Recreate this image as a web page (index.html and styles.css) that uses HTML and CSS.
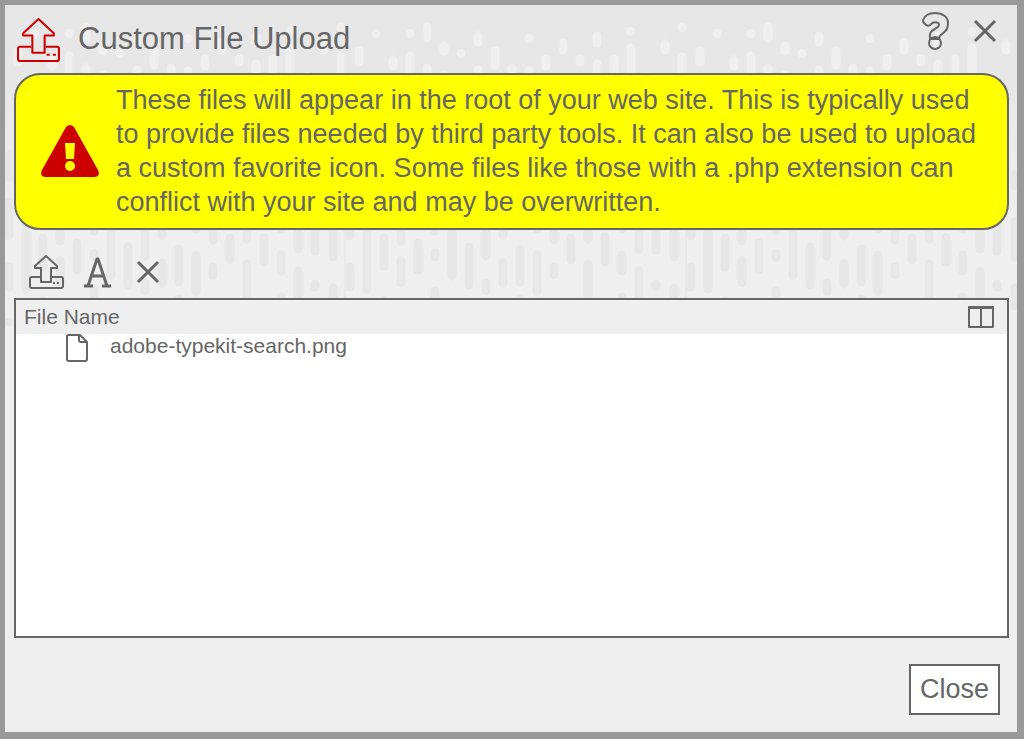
FILE: index.html
```html
<!DOCTYPE html>
<html lang="en">
<head>
    <meta charset="UTF-8">
    <meta name="viewport" content="width=device-width, initial-scale=1.0">
    <title>Custom File Upload</title>
    <link rel="stylesheet" href="styles.css">
</head>
<body>
    <div class="dialog">
        <svg class="backdrop" aria-hidden="true">
            <defs>
                <linearGradient id="fade" x1="0" y1="0" x2="0" y2="1">
                    <stop offset="0.2" stop-color="#e7e7e7"/>
                    <stop offset="0.65" stop-color="#efefef"/>
                </linearGradient>
                <pattern id="rain" width="341" height="340" patternUnits="userSpaceOnUse">
                    <g fill="none" stroke-width="9" stroke-linecap="round">
                        <path stroke="#efefef" d="M13 46V57M30 28.500v.1M30 72V90M47 55V61M64 28.500v.1M64 51V90M81 22V33M81 63V90M98 41V46M98 70V90M115 48.500v.1M132 31V37M132 65V90M149 46V60M166 63V90M183 33.500v.1M183 66V90M200 54V61M217 38V45M234 54V57M251 31V38M251 59V90M268 54V90M285 26.500v.1M285 43V90M302 71V90M319 39V45M336 22.500v.1M336 52V90"/>
                        <path stroke="#e7e7e7" d="M4 150V172M4 197V231M4 262V282M4 317v.1M345 170V181M345 216V252M345 283V301M21 200V284M38 233V262M38 296V310M55 200V236M55 255V278M72 238V265M89 200V226M89 248V252M89 286V310M106 200V271M123 242V280M140 200V251M140 278V286M157 200V231M157 258V279M174 244V277M174 294V310M191 200V224M191 250V287M208 200V235M208 262V270M225 233V255M242 200V234M242 259V310M259 232V257M276 200V224M276 250V266M276 292V310M293 200V244M293 266V310M310 200V246M310 279V282M328 170V181M328 216V252M328 283V301"/>
                    </g>
                    <path fill="#e9e9e9" d="M339 190h2v110h-2z"/>
                </pattern>
            </defs>
            <rect width="100%" height="340" fill="url(#fade)"/>
            <rect width="100%" height="340" fill="url(#rain)"/>
        </svg>

        <div class="titlebar">
            <svg class="title-icon" viewBox="0 0 44 44" aria-hidden="true">
                <path d="M15 29H4q-2 0-2 2v10q0 2 2 2h36q2 0 2-2V31q0-2-2-2H29"/>
                <path d="M22 2 7 16v2h9v17h12V18h9v-2z"/>
                <path d="M30 37h3M36 37h3"/>
            </svg>
            <h1>Custom File Upload</h1>
            <button class="icon-button" aria-label="Help">
                <svg width="28" height="40" viewBox="0 0 28 40">
                    <path d="M2 9C4 4 8 2 14 2c8 0 13 4 13 10 0 6-2 8-6 11q-3 2-3 5H9c-1-6 1-8 5-10 3-2 4-3 4-4 0-3-5-4-8-1-1 2-3 2-5 1q-3-2-3-5z"/>
                    <circle cx="14" cy="32" r="6"/>
                </svg>
            </button>
            <button class="icon-button" aria-label="Close window">
                <svg width="24" height="24" viewBox="0 0 24 24"><path class="cross" d="M2 2 22 22M22 2 2 22"/></svg>
            </button>
        </div>

        <div class="warning">
            <svg class="warning-icon" viewBox="0 0 58 52" aria-hidden="true">
                <path fill="#cc0000" d="M25 2q4-4 8 0l24 43q3 7-4 7H5q-7 0-4-7z"/>
                <path fill="#ffff00" d="M24 18h10l-1 16h-8z"/>
                <circle cx="29" cy="41" r="5" fill="#ffff00"/>
            </svg>
            <p>These files will appear in the root of your web site. This is typically used to provide files needed by third party tools. It can also be used to upload a custom favorite icon. Some files like those with a .php extension can conflict with your site and may be overwritten.</p>
        </div>

        <div class="toolbar">
            <button class="icon-button" aria-label="Upload">
                <svg width="36" height="36" viewBox="0 0 36 36">
                    <path d="M12 23H4q-2 0-2 2v7q0 2 2 2h29q2 0 2-2v-7q0-2-2-2H24"/>
                    <path d="M18 2 7 12v2h6v14h10V14h6v-2z"/>
                    <path d="M25 29h2M29 29h2"/>
                </svg>
            </button>
            <button class="icon-button" aria-label="Rename">
                <svg width="28" height="32" viewBox="0 0 28 32"><path class="letter" d="M0 30h9M18 30h9M4 30 13 3h1l9 27M8 20h12"/></svg>
            </button>
            <button class="icon-button" aria-label="Delete">
                <svg width="32" height="24" viewBox="0 0 32 24"><path class="cross" d="M6 2 26 22M26 2 6 22"/></svg>
            </button>
        </div>

        <div class="file-list">
            <table>
                <thead>
                    <tr>
                        <th>File Name</th>
                        <th class="columns">
                            <button class="icon-button" aria-label="Columns">
                                <svg width="28" height="24" viewBox="0 0 28 24"><path d="M2 2h24v20H2zM2 3h24M14 3v19"/></svg>
                            </button>
                        </th>
                    </tr>
                </thead>
                <tbody>
                    <tr>
                        <td colspan="2">
                            <div class="file">
                                <svg width="22" height="28" viewBox="0 0 22 28" aria-hidden="true"><path d="M2 1h12l7 7v17q0 2-2 2H3q-2 0-2-2V2zM13 1v5q0 2 2 2h6"/></svg>
                                <span>adobe-typekit-search.png</span>
                            </div>
                        </td>
                    </tr>
                </tbody>
            </table>
        </div>

        <div class="footer">
            <button class="close-button">Close</button>
        </div>
    </div>
</body>
</html>
```
FILE: styles.css
```css
* {
    box-sizing: border-box;
}

body {
    margin: 0;
    font-family: "Liberation Sans", Arial, sans-serif;
    color: #666666;
}

.dialog {
    position: relative;
    display: flex;
    flex-direction: column;
    min-height: 100vh;
    padding: 0 8px 0 9px;
    border: solid #999999;
    border-width: 5px 7px 7px 5px;
    background: #efefef;
}

.backdrop {
    position: absolute;
    top: 0;
    left: 0;
    width: 100%;
    height: 340px;
    z-index: 0;
}

.titlebar, .warning, .toolbar, .file-list, .footer {
    position: relative;
    z-index: 1;
}

svg {
    display: block;
    flex: none;
}

.icon-button svg, .title-icon, .file svg {
    fill: none;
    stroke: #666666;
    stroke-width: 2;
    stroke-linejoin: round;
}

.icon-button .cross, .icon-button .letter {
    stroke-width: 3;
}

.titlebar {
    display: flex;
    align-items: center;
    height: 68px;
    padding: 0 12px 0 2px;
}

.titlebar .title-icon {
    width: 45px;
    height: 45px;
    stroke: #cc0000;
}

h1 {
    flex: 1;
    margin: 0;
    padding-left: 17px;
    font-size: 31px;
    font-weight: normal;
}

.icon-button {
    display: flex;
    padding: 0;
    border: none;
    background: none;
    cursor: pointer;
}

.titlebar .icon-button {
    margin-left: 24px;
    margin-bottom: 16px;
}

.warning {
    display: flex;
    align-items: center;
    padding: 8px 20px 9px 25px;
    border: 2px solid #666666;
    border-radius: 26px;
    background: #ffff00;
}

.warning-icon {
    width: 58px;
    height: 52px;
}

.warning p {
    margin: 0;
    padding-left: 17px;
    font-size: 27px;
    line-height: 34px;
}

.toolbar {
    display: flex;
    align-items: center;
    gap: 20px;
    height: 68px;
    padding: 16px 14px 0;
}

.file-list {
    flex: 1;
    border: 2px solid #666666;
    background: #ffffff;
}

table {
    width: 100%;
    border-collapse: collapse;
    font-size: 21px;
}

th, td {
    padding: 0;
    font-weight: normal;
    text-align: left;
}

th {
    height: 34px;
    padding-left: 8px;
    background: #efefef;
}

.columns {
    width: 48px;
}

.file {
    display: flex;
    gap: 22px;
    padding-left: 50px;
    line-height: 24px;
}

.footer {
    display: flex;
    justify-content: flex-end;
    padding: 26px 9px 17px;
}

.close-button {
    padding: 8px 9px;
    border: 2px solid #666666;
    background: #ffffff;
    color: #666666;
    font-family: inherit;
    font-size: 27px;
    line-height: 31px;
    cursor: pointer;
}
```
